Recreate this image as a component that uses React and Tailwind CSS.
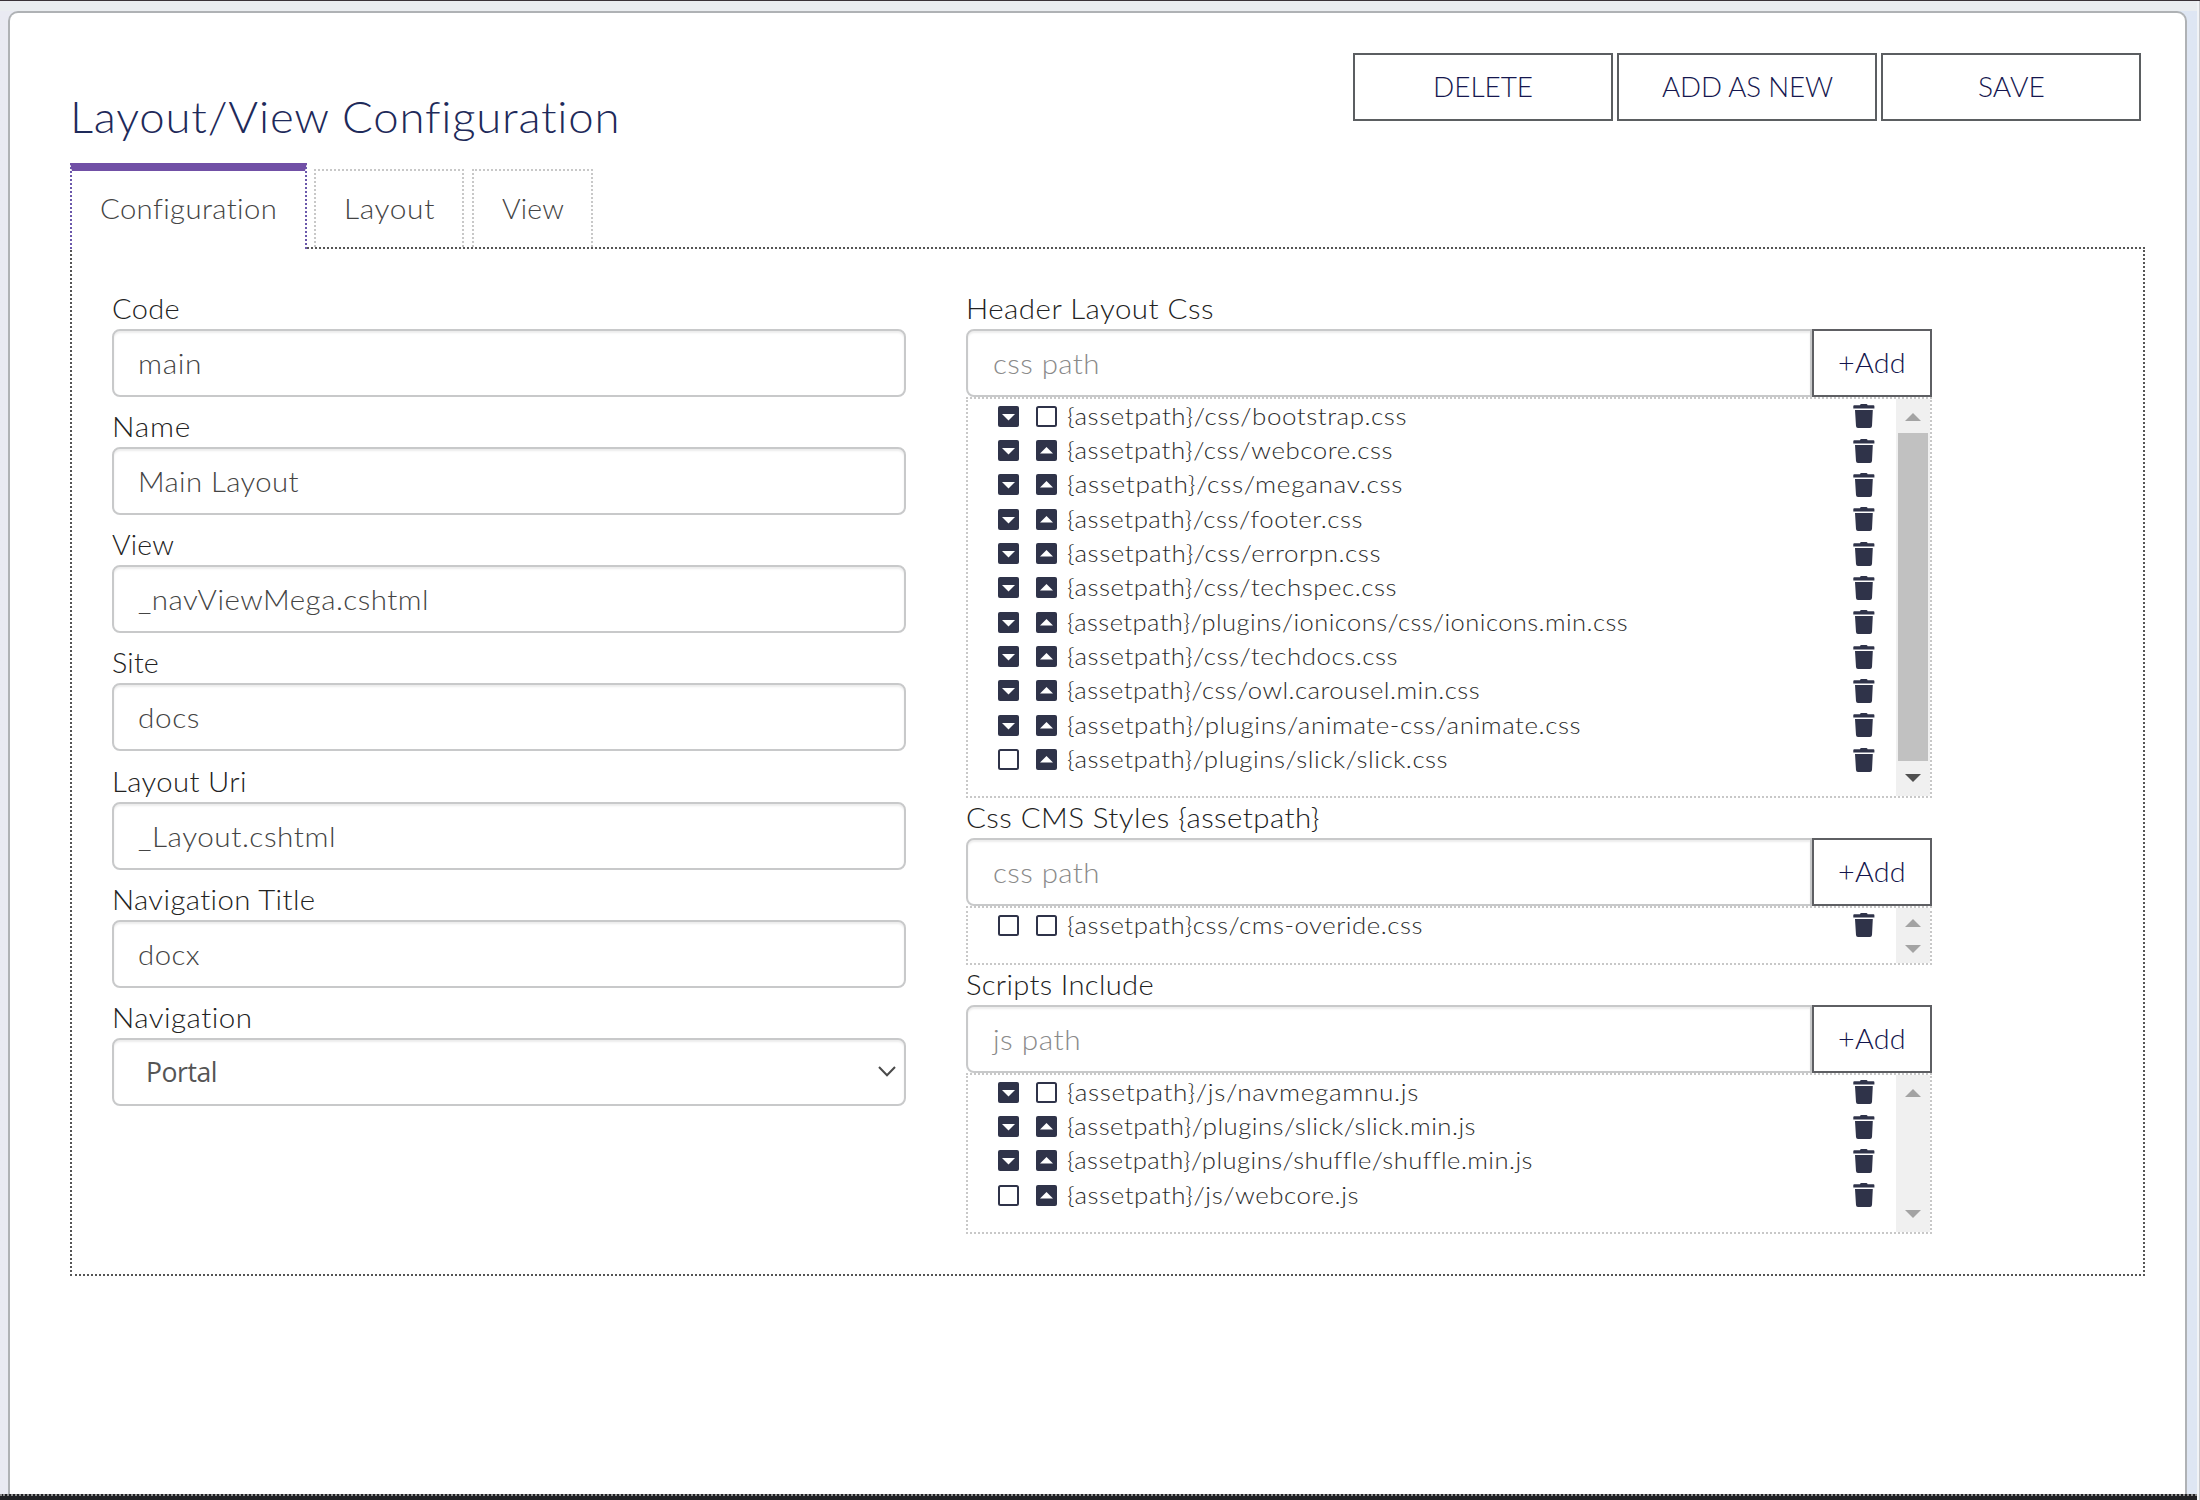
import { useLayoutEffect, useRef, useState } from "react";

// Widens a single line, by its glyphs and by its letter spacing, so that it fills the given width.
function Line({ w, children, className = "" }) {
  const ref = useRef(null);
  const [fit, setFit] = useState({ spacing: 0, stretch: 1 });
  useLayoutEffect(() => {
    const natural = ref.current.getBoundingClientRect().width;
    const stretch = 1 + (w / natural - 1) * 0.6;
    setFit({ spacing: (w / stretch - natural) / children.length, stretch });
  }, []);
  return (
    <span className={`inline-block whitespace-pre ${className}`} style={{ width: `${w}px` }}>
      <span
        ref={ref}
        className="inline-block origin-left"
        style={{ letterSpacing: `${fit.spacing}px`, transform: `scaleX(${fit.stretch})` }}
      >
        {children}
      </span>
    </span>
  );
}

function Label({ w, children }) {
  return (
    <div className="flex h-10 items-center pb-[2px] text-[28px] leading-none text-[#222]">
      <Line w={w}>{children}</Line>
    </div>
  );
}

const fields = [
  ["Code", 68, "main", 64],
  ["Name", 79, "Main Layout", 161],
  ["View", 62, "_navViewMega.cshtml", 291],
  ["Site", 47, "docs", 62],
  ["Layout Uri", 135, "_Layout.cshtml", 198],
  ["Navigation Title", 204, "docx", 62],
];

const headerCss = [
  ["/css/bootstrap.css", 340, true, false],
  ["/css/webcore.css", 326, true, true],
  ["/css/meganav.css", 336, true, true],
  ["/css/footer.css", 296, true, true],
  ["/css/errorpn.css", 314, true, true],
  ["/css/techspec.css", 330, true, true],
  ["/plugins/ionicons/css/ionicons.min.css", 561, true, true],
  ["/css/techdocs.css", 331, true, true],
  ["/css/owl.carousel.min.css", 413, true, true],
  ["/plugins/animate-css/animate.css", 514, true, true],
  ["/plugins/slick/slick.css", 381, false, true],
];
const cmsCss = [["css/cms-overide.css", 356, false, false]];
const scripts = [
  ["/js/navmegamnu.js", 352, true, false],
  ["/plugins/slick/slick.min.js", 409, true, true],
  ["/plugins/shuffle/shuffle.min.js", 464, true, true],
  ["/js/webcore.js", 292, false, true],
];

function Box({ on, up }) {
  return (
    <svg width="21" height="21" viewBox="0 0 21 21" className="shrink-0">
      {on ? (
        <>
          <rect width="21" height="21" rx="2" fill="#2f3349" />
          <path d={up ? "M4 13.5 L10.5 7 L17 13.5Z" : "M4 8 L17 8 L10.5 14.5Z"} fill="#fff" />
        </>
      ) : (
        <rect x="1" y="1" width="19" height="19" rx="1.5" fill="#fff" stroke="#2f3349" strokeWidth="2" />
      )}
    </svg>
  );
}

function Trash() {
  return (
    <svg width="22" height="24" viewBox="0 0 22 24" className="ml-auto shrink-0">
      <path
        d="M7 1.2 Q7.2 0 8.4 0 H13.2 Q14.4 0 14.6 1.2 H20.5 Q21.4 1.3 21.4 2.2 V4.4 H0.3 V2.2 Q0.3 1.3 1.2 1.2Z"
        fill="#2f3349"
      />
      <path d="M2 6 H19.8 L19 22 Q18.8 24 17 24 H5 Q3.1 24 3 22Z" fill="#2f3349" />
    </svg>
  );
}

function Arrow({ up, dark }) {
  return (
    <svg width="16" height="8" viewBox="0 0 16 8" className="mx-auto block">
      <path d={up ? "M0 8 L8 0 L16 8Z" : "M0 0 L16 0 L8 8Z"} fill={dark ? "#505050" : "#a3a3a3"} />
    </svg>
  );
}

function PathList({ label, labelW, placeholder, placeholderW, rows, height, arrowPad, thumb }) {
  return (
    <div>
      <Label w={labelW}>{label}</Label>
      <div className="flex h-[68px] text-[28px] leading-none">
        <div className="flex flex-1 items-center rounded-l-lg border-2 border-[#c8c9ca] bg-white pl-[25px] text-[#8a8a8a] shadow-[inset_0_2px_2px_rgba(0,0,0,0.075)]">
          <Line w={placeholderW}>{placeholder}</Line>
        </div>
        <div className="flex w-[120px] items-center justify-center border-2 border-[#5e5f63] pb-[2px] text-[#12144c]">
          <Line w={68}>+Add</Line>
        </div>
      </div>
      <div className={`flex border-2 border-dotted border-[#c8c8c8] ${height}`}>
        <div className="flex-1 pl-[30px] pr-[21px]">
          {rows.map(([path, w, down, up]) => (
            <div key={path} className="flex h-[34.35px] items-center">
              <Box on={down} />
              <span className="w-[17px]" />
              <Box on={up} up />
              <div className="pb-px pl-[10px] text-[24px] leading-none text-[#2c2c2c]">
                <Line w={w}>{"{assetpath}" + path}</Line>
              </div>
              <Trash />
            </div>
          ))}
        </div>
        <div className={`flex w-[34px] flex-col justify-between bg-[#f0f0f0] ${arrowPad}`}>
          <Arrow up />
          {thumb && <div className="mx-[2px] mt-3 mb-[13px] flex-1 bg-[#c1c1c1]" />}
          <Arrow dark={thumb} />
        </div>
      </div>
    </div>
  );
}

function ActionButton({ w, children }) {
  return (
    <div className="flex h-[68px] w-[260px] items-center justify-center border-2 border-[#5b5e61] pb-[2px] text-[28px] leading-none text-[#15174f]">
      <Line w={w}>{children}</Line>
    </div>
  );
}

export default function App() {
  return (
    <div className="flex h-[1500px] w-[2200px] flex-col overflow-hidden bg-[#f1f3f6] font-['Lato',sans-serif] font-light">
      <div className="h-px shrink-0 bg-[#3a3238]" />
      <div className="flex min-h-0 flex-1 border-r border-[#c9cacd]">
        <div className="flex w-[2197px] flex-col">
          <div className="h-[10px] shrink-0 bg-[#eaedf0]" />
          <div className="flex flex-1 flex-col bg-linear-to-r from-[#e9eaf2] via-[#e9edf0] to-[#dee6f3] pl-2 pr-[10px]">
            <div className="flex-1 rounded-t-[10px] border-2 border-b-0 border-[#afb2b5] bg-white pl-[60px] pr-10">
              <div className="flex h-[150px] justify-between">
                <h1 className="pt-[82px] text-[43px] leading-none text-[#1e2a5a]">
                  <Line w={550}>Layout/View Configuration</Line>
                </h1>
                <div className="flex gap-1 pt-10 pr-1">
                  <ActionButton w={100}>DELETE</ActionButton>
                  <ActionButton w={171}>ADD AS NEW</ActionButton>
                  <ActionButton w={67}>SAVE</ActionButton>
                </div>
              </div>

              <div className="flex items-end text-[28px] leading-none text-[#444]">
                <div className="relative z-10 -mb-[2px] flex h-[86px] w-[237px] items-center border-2 border-b-0 border-t-8 border-dotted border-[#6b58ab] bg-white pl-[28px] pb-1 [border-top-color:#7150a6] [border-top-style:solid]">
                  <Line w={177}>Configuration</Line>
                </div>
                <div className="ml-[7px] flex h-[78px] w-[150px] items-center border-2 border-b-0 border-dotted border-[#c8c8c8] pl-[28px] pb-[2px]">
                  <Line w={91}>Layout</Line>
                </div>
                <div className="ml-2 flex h-[78px] w-[121px] items-center border-2 border-b-0 border-dotted border-[#c8c8c8] pl-[28px] pb-[2px]">
                  <Line w={62}>View</Line>
                </div>
              </div>

              <div className="flex h-[1029px] border-2 border-dotted border-[#555] pl-10 pt-10">
                <div className="w-[794px]">
                  {fields.map(([label, lw, value, vw]) => (
                    <div key={label} className="mb-[10.17px]">
                      <Label w={lw}>{label}</Label>
                      <div className="flex h-[68px] items-center rounded-lg border-2 border-[#c8c9ca] pl-6 text-[28px] leading-none text-[#444] shadow-[inset_0_2px_2px_rgba(0,0,0,0.075)]">
                        <Line w={vw}>{value}</Line>
                      </div>
                    </div>
                  ))}
                  <Label w={141}>Navigation</Label>
                  <div className="flex h-[68px] items-center justify-between rounded-lg border-2 border-[#c8c9ca] pl-8 pr-2 text-[28px] leading-none text-[#555] shadow-[inset_0_2px_2px_rgba(0,0,0,0.075)]">
                    <Line w={71} className="pb-px font-['Open_Sans',sans-serif] font-normal">Portal</Line>
                    <svg width="18" height="11" viewBox="0 0 18 11" fill="none" stroke="#4a4a4a" strokeWidth="2">
                      <path d="M1 1 L9 9.2 L17 1" />
                    </svg>
                  </div>
                </div>

                <div className="ml-[60px] w-[966px]">
                  <PathList label="Header Layout Css" labelW={248} placeholder="css path" placeholderW={107} rows={headerCss} height="h-[401px]" arrowPad="pt-[14px] pb-[14px]" thumb />
                  <PathList label="Css CMS Styles {assetpath}" labelW={354} placeholder="css path" placeholderW={107} rows={cmsCss} height="h-[59px]" arrowPad="pt-[11px] pb-[10px]" />
                  <PathList label="Scripts Include" labelW={188} placeholder="js path" placeholderW={88} rows={scripts} height="h-[161px]" arrowPad="pt-[14px] pb-[14px]" />
                </div>
              </div>
            </div>
          </div>
          <div className="h-[6px] shrink-0 border-t-2 border-dotted border-[#8a8a8a] bg-[#202124]" />
        </div>
      </div>
    </div>
  );
}
